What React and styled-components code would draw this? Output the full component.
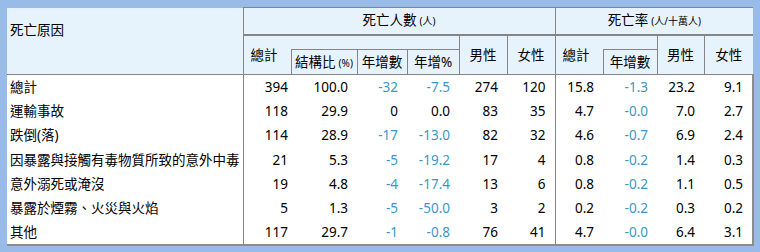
import React from "react";
import styled, { createGlobalStyle } from "styled-components";

const GlobalStyle = createGlobalStyle`
  body {
    margin: 0;
    background: #99bbe8;
    font-family: "Noto Sans", "Noto Sans CJK TC", sans-serif;
  }
`;

const Page = styled.div`
  padding: 7px 0 0 7px;
  height: 252px;
  box-sizing: border-box;
`;

const Table = styled.table`
  width: 746px;
  table-layout: fixed;
  border-collapse: collapse;
  font-size: 13.5px;
  color: #000;
`;

const HeadRow = styled.tr`
  height: ${(p) => p.$h}px;
`;

const Th = styled.th`
  background: #e6f3fd;
  font-weight: normal;
  padding: 0;
  line-height: 16px;
  white-space: nowrap;
  text-align: ${(p) => p.$align || "center"};
  vertical-align: ${(p) => p.$valign || "middle"};
  padding-left: ${(p) => p.$pl || 0}px;
  padding-top: ${(p) => p.$pt || 0}px;
  border-top: ${(p) => (p.$top ? `${p.$top}px solid #858585` : "none")};
  border-left: ${(p) => (p.$left ? "1px solid #858585" : "none")};
  border-right: ${(p) => (p.$right ? "1px solid #858585" : "none")};
  border-bottom: ${(p) => (p.$bottom ? `${p.$bottom}px solid #858585` : "none")};
`;

const Unit = styled.span`
  font-size: 10px;
  margin-left: 3px;
`;

const BodyRow = styled.tr`
  height: 24.3px;
  &:last-child td {
    border-bottom: 2px solid #8c8c8c;
  }
`;

const Td = styled.td`
  background: #fff;
  padding: 0 ${(p) => (p.$pr === undefined ? 9 : p.$pr)}px 0 ${(p) => p.$pl || 0}px;
  text-align: ${(p) => (p.$label ? "left" : "right")};
  white-space: nowrap;
  line-height: 16px;
  color: ${(p) => (p.$neg ? "#3a98c9" : "#000")};
  border-right: ${(p) => (p.$divide ? "1px solid #858585" : p.$edge ? "2px solid #8c8c8c" : "none")};
`;

const rows = [
  ["總計", "394", "100.0", "-32", "-7.5", "274", "120", "15.8", "-1.3", "23.2", "9.1"],
  ["運輸事故", "118", "29.9", "0", "0.0", "83", "35", "4.7", "-0.0", "7.0", "2.7"],
  ["跌倒(落)", "114", "28.9", "-17", "-13.0", "82", "32", "4.6", "-0.7", "6.9", "2.4"],
  ["因暴露與接觸有毒物質所致的意外中毒", "21", "5.3", "-5", "-19.2", "17", "4", "0.8", "-0.2", "1.4", "0.3"],
  ["意外溺死或淹沒", "19", "4.8", "-4", "-17.4", "13", "6", "0.8", "-0.2", "1.1", "0.5"],
  ["暴露於煙霧、火災與火焰", "5", "1.3", "-5", "-50.0", "3", "2", "0.2", "-0.2", "0.3", "0.2"],
  ["其他", "117", "29.7", "-1", "-0.8", "76", "41", "4.7", "-0.0", "6.4", "3.1"],
];

const widths = [236, 48, 66, 50, 52, 48, 48, 48, 54, 47, 49];

export default function App() {
  return (
    <Page>
      <GlobalStyle />
      <Table>
        <colgroup>
          {widths.map((w, i) => (
            <col key={i} style={{ width: w }} />
          ))}
        </colgroup>
        <thead>
          <HeadRow $h={27}>
            <Th rowSpan={3} $align="left" $valign="top" $pl={3} $pt={14} $right $bottom={1}>
              死亡原因
            </Th>
            <Th colSpan={6} $top={1} $bottom={2} $right>
              死亡人數<Unit>(人)</Unit>
            </Th>
            <Th colSpan={4} $top={1} $bottom={2}>
              死亡率<Unit>(人/十萬人)</Unit>
            </Th>
          </HeadRow>
          <HeadRow $h={15}>
            <Th rowSpan={2} $align="left" $pl={7} $bottom={1}>
              總計
            </Th>
            <Th colSpan={3} />
            <Th rowSpan={2} $left $bottom={1}>
              男性
            </Th>
            <Th rowSpan={2} $left $bottom={1} $right>
              女性
            </Th>
            <Th rowSpan={2} $align="left" $pl={7} $bottom={1}>
              總計
            </Th>
            <Th />
            <Th rowSpan={2} $left $bottom={1}>
              男性
            </Th>
            <Th rowSpan={2} $left $bottom={1}>
              女性
            </Th>
          </HeadRow>
          <HeadRow $h={25}>
            <Th $top={1} $left $bottom={1}>
              結構比<Unit>(%)</Unit>
            </Th>
            <Th $top={1} $left $bottom={1}>
              年增數
            </Th>
            <Th $top={1} $left $bottom={1}>
              年增%
            </Th>
            <Th $top={1} $left $bottom={1}>
              年增數
            </Th>
          </HeadRow>
        </thead>
        <tbody>
          {rows.map((r) => (
            <BodyRow key={r[0]}>
              {r.map((v, i) =>
                i === 0 ? (
                  <Td key={i} $label $pl={3} $pr={0} $divide>
                    {v}
                  </Td>
                ) : (
                  <Td
                    key={i}
                    $pr={i === 1 ? 3 : 9}
                    $neg={v.startsWith("-")}
                    $divide={i === 6}
                    $edge={i === 10}
                  >
                    {v}
                  </Td>
                )
              )}
            </BodyRow>
          ))}
        </tbody>
      </Table>
    </Page>
  );
}
